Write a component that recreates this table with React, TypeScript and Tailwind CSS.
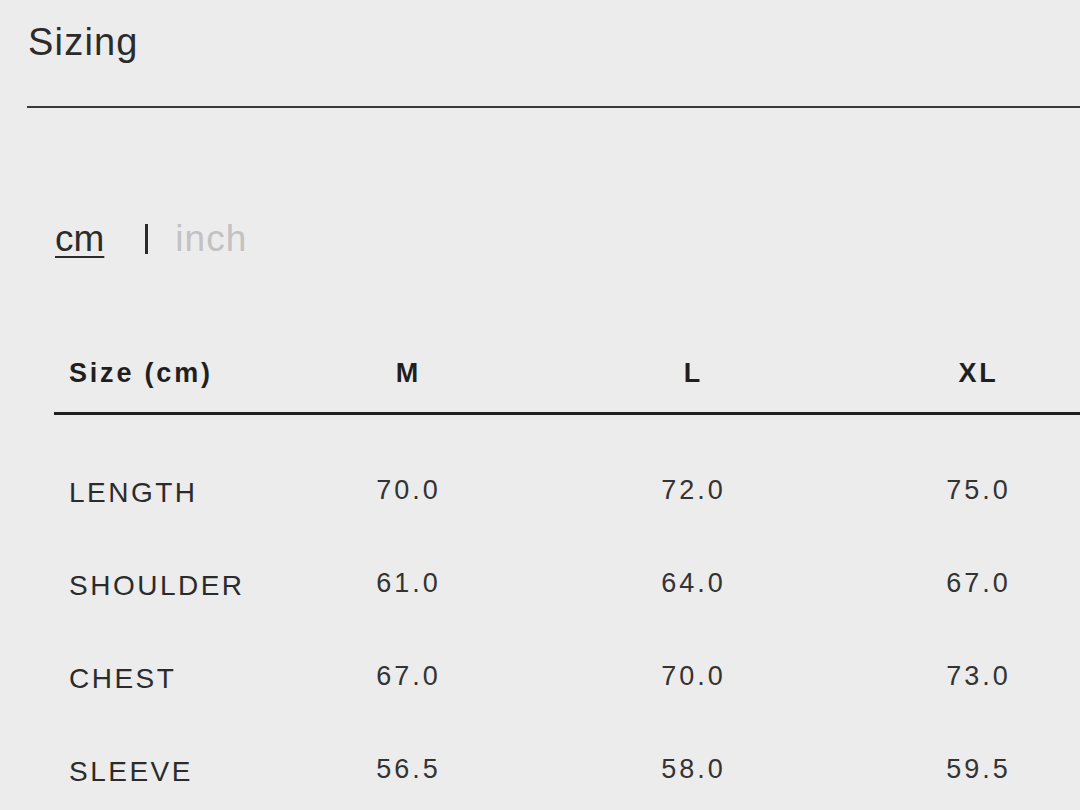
const rows = [
  { label: "LENGTH", values: ["70.0", "72.0", "75.0"] },
  { label: "SHOULDER", values: ["61.0", "64.0", "67.0"] },
  { label: "CHEST", values: ["67.0", "70.0", "73.0"] },
  { label: "SLEEVE", values: ["56.5", "58.0", "59.5"] },
];

const sizes = ["M", "L", "XL"];

export default function App() {
  return (
    <div className="h-[810px] w-[1080px] overflow-hidden bg-[#ececec] font-['Liberation_Sans',Arial,sans-serif] text-[#2b2b2b]">
      <h1 className="pl-[28px] pt-[23px] text-[38px] leading-[38px] tracking-[1.2px]">Sizing</h1>
      <div className="ml-[27px] mt-[45px] h-[2px] bg-[#3a3a3a]" />

      <div className="mt-[112px] flex items-center pl-[55px] text-[37px] leading-[38px]">
        <span className="underline decoration-[2px] underline-offset-[5px]">cm</span>
        <span className="ml-[41px] h-[30px] w-[3px] bg-[#2b2b2b]" />
        <span className="ml-[27px] tracking-[1px] text-[#c2c2c2]">inch</span>
      </div>

      <div className="ml-[54px] mt-[102px] w-[1067px]">
        <div className="grid grid-cols-[212px_285px_285px_285px] border-b-[3px] border-[#1f1f1f] pb-[26px] text-[27px] font-bold leading-[26px] tracking-[2.8px] text-[#1f1f1f]">
          <div className="pl-[15px]">Size (cm)</div>
          {sizes.map((s) => (
            <div key={s} className="text-center">{s}</div>
          ))}
        </div>

        <div className="mt-[61px]">
          {rows.map((r) => (
            <div key={r.label} className="grid h-[93px] grid-cols-[212px_285px_285px_285px] items-start leading-[28px]">
              <div className="pl-[15px] pt-[3px] text-[28px] tracking-[2.5px]">{r.label}</div>
              {r.values.map((v, i) => (
                <div key={i} className="text-center text-[27px] tracking-[3px] text-[#333]">{v}</div>
              ))}
            </div>
          ))}
        </div>
      </div>
    </div>
  );
}
